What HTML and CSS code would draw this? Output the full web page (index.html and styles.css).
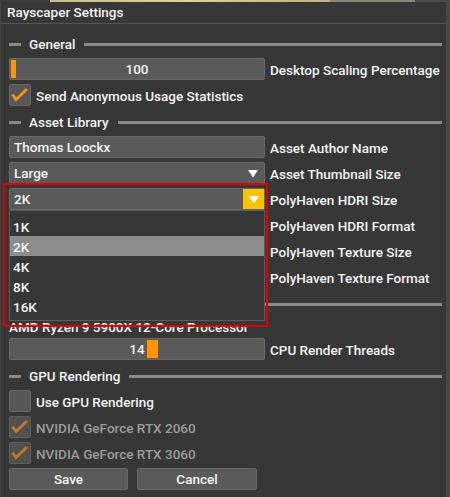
FILE: index.html
```html
<!DOCTYPE html>
<html>
<head>
<meta charset="utf-8">
<link rel="stylesheet" href="styles.css">
</head>
<body>
<div class="strip"></div>
<div class="window">
  <div class="titlebar">Rayscaper Settings</div>
  <div class="content">
    <div class="header"><span class="dash"></span><span class="htext">General</span><span class="hline"></span></div>
    <div class="row">
      <div class="slider"><span class="handle" style="left:1px;width:5px"></span><span class="val">100</span></div>
      <span class="label">Desktop Scaling Percentage</span>
    </div>
    <div class="row full">
      <div class="check"><span class="box"><svg width="22" height="22" viewBox="0 0 22 22"><polyline points="3.5,10.5 7,15.5 18,5" fill="none" stroke="#f3901a" stroke-width="3"/></svg></span><span class="ctext">Send Anonymous Usage Statistics</span></div>
    </div>
    <div class="header"><span class="dash"></span><span class="htext">Asset Library</span><span class="hline"></span></div>
    <div class="row">
      <div class="field">Thomas Loockx</div>
      <span class="label">Asset Author Name</span>
    </div>
    <div class="row">
      <div class="combo"><span class="ctxt">Large</span><span class="arrow"><svg width="12" height="9" viewBox="0 0 12 9"><polygon points="1,1 11,1 6,8.5" fill="#fff"/></svg></span></div>
      <span class="label">Asset Thumbnail Size</span>
    </div>
    <div class="row">
      <div class="combo"><span class="ctxt">2K</span><span class="arrow yellow"><svg width="12" height="9" viewBox="0 0 12 9"><polygon points="1,1 11,1 6,8.5" fill="#fff"/></svg></span></div>
      <span class="label">PolyHaven HDRI Size</span>
    </div>
    <div class="row">
      <div class="combo"></div>
      <span class="label">PolyHaven HDRI Format</span>
    </div>
    <div class="row">
      <div class="combo"></div>
      <span class="label">PolyHaven Texture Size</span>
    </div>
    <div class="row">
      <div class="combo"></div>
      <span class="label">PolyHaven Texture Format</span>
    </div>
    <div class="header"><span class="dash"></span><span class="htext">CPU Rendering</span><span class="hline"></span></div>
    <div class="cpulabel">AMD Ryzen 9 5900X 12-Core Processor</div>
    <div class="row">
      <div class="slider"><span class="handle" style="left:137px;width:11px"></span><span class="val">14</span></div>
      <span class="label">CPU Render Threads</span>
    </div>
    <div class="header"><span class="dash"></span><span class="htext">GPU Rendering</span><span class="hline"></span></div>
    <div class="row full">
      <div class="check"><span class="box"></span><span class="ctext">Use GPU Rendering</span></div>
    </div>
    <div class="row full">
      <div class="check disabled"><span class="box"><svg width="22" height="22" viewBox="0 0 22 22"><polyline points="3.5,10.5 7,15.5 18,5" fill="none" stroke="#c37723" stroke-width="3"/></svg></span><span class="ctext">NVIDIA GeForce RTX 2060</span></div>
    </div>
    <div class="row full">
      <div class="check disabled"><span class="box"><svg width="22" height="22" viewBox="0 0 22 22"><polyline points="3.5,10.5 7,15.5 18,5" fill="none" stroke="#c37723" stroke-width="3"/></svg></span><span class="ctext">NVIDIA GeForce RTX 3060</span></div>
    </div>
    <div class="buttons">
      <div class="btn save">Save</div>
      <div class="btn cancel">Cancel</div>
    </div>
  </div>
</div>
<div class="popup">
  <div class="item">1K</div>
  <div class="item sel">2K</div>
  <div class="item">4K</div>
  <div class="item">8K</div>
  <div class="item">16K</div>
</div>
<div class="redbox"></div>
</body>
</html>
```
FILE: styles.css
```css
* { box-sizing: border-box; }
html, body { margin: 0; padding: 0; }
body {
  width: 450px;
  height: 497px;
  background: #373737;
  font-family: Roboto, "Noto Sans", sans-serif;
  font-size: 13.5px;
  font-weight: 500;
  color: #f2f2f2;
  position: relative;
  overflow: hidden;
}
.strip {
  height: 2px;
  background: linear-gradient(90deg, #3e3e3c 0, #3e3e3c 50px, #c6c08c 50px, #d9d39c 190px, #b9b482 330px, #8a877a 330px, #8a877a 415px, #4a4a4f 415px);
}
.window {
  height: 495px;
  border-left: 1px solid #454545;
  border-right: 4px solid #48484c;
  background: #373737;
}
.titlebar {
  height: 22px;
  line-height: 21px;
  padding-left: 6px;
  border-bottom: 1px solid #555555;
}
.content {
  display: flex;
  flex-direction: column;
  gap: 4px;
  padding: 8px 4px 0 8px;
}
.header {
  height: 22px;
  display: flex;
  align-items: flex-start;
}
.dash {
  width: 12px;
  height: 3px;
  margin-top: 11px;
  background: #8a8a8a;
}
.htext {
  height: 22px;
  line-height: 20px;
  padding-top: 2px;
  margin: 0 9px 0 8px;
}
.hline {
  flex: 1;
  height: 3px;
  margin-top: 11px;
  background: #8a8a8a;
}
.row {
  height: 22px;
  display: grid;
  grid-template-columns: 256px 1fr;
  grid-template-rows: 22px;
  column-gap: 5px;
}
.row.full { grid-template-columns: 1fr; }
.label {
  height: 22px;
  line-height: 20px;
  padding-top: 2px;
  white-space: nowrap;
}
.slider, .field, .combo, .btn {
  height: 22px;
  background: #5a5a5a;
  border: 1px solid #686868;
  border-radius: 2px;
  line-height: 19px;
  padding-top: 1px;
}
.slider {
  position: relative;
  text-align: center;
}
.slider .val { position: relative; }
.handle {
  position: absolute;
  top: 1px;
  bottom: 1px;
  background: #ff9500;
}
.field { padding-left: 4px; }
.combo {
  display: flex;
  padding-top: 0;
}
.ctxt {
  flex: 1;
  padding-left: 4px;
  padding-top: 1px;
}
.arrow {
  width: 21px;
  display: flex;
  align-items: center;
  justify-content: center;
  margin-right: 1px;
}
.arrow.yellow {
  background: #f9c300;
  margin-right: 0;
}
.check {
  display: flex;
  align-items: flex-start;
  gap: 5px;
  height: 22px;
}
.box {
  width: 22px;
  height: 22px;
  background: #575757;
  border: 1px solid #666666;
  border-radius: 2px;
  position: relative;
}
.box svg {
  position: absolute;
  left: -1px;
  top: -1px;
}
.ctext {
  height: 22px;
  line-height: 20px;
  padding-top: 2px;
}
.check.disabled .ctext { color: #9c9c9c; }
.check.disabled .box { background: #505050; border-color: #5e5e5e; }
.cpulabel {
  height: 16px;
  line-height: 16px;
  padding-top: 1px;
  white-space: nowrap;
}
.buttons {
  display: flex;
  gap: 9px;
}
.btn {
  text-align: center;
}
.save { width: 119px; }
.cancel { width: 120px; }
.popup {
  position: absolute;
  left: 9px;
  top: 210px;
  width: 256px;
  height: 111px;
  background: #373737;
  border: 1px solid #5c5c5c;
  padding-top: 5px;
}
.item {
  height: 20px;
  line-height: 20px;
  padding-left: 3px;
  padding-top: 1px;
}
.item.sel { background: #8c8c8c; }
.redbox {
  position: absolute;
  left: 3px;
  top: 183px;
  width: 265px;
  height: 144px;
  border: 2px solid #e40000;
}
```
